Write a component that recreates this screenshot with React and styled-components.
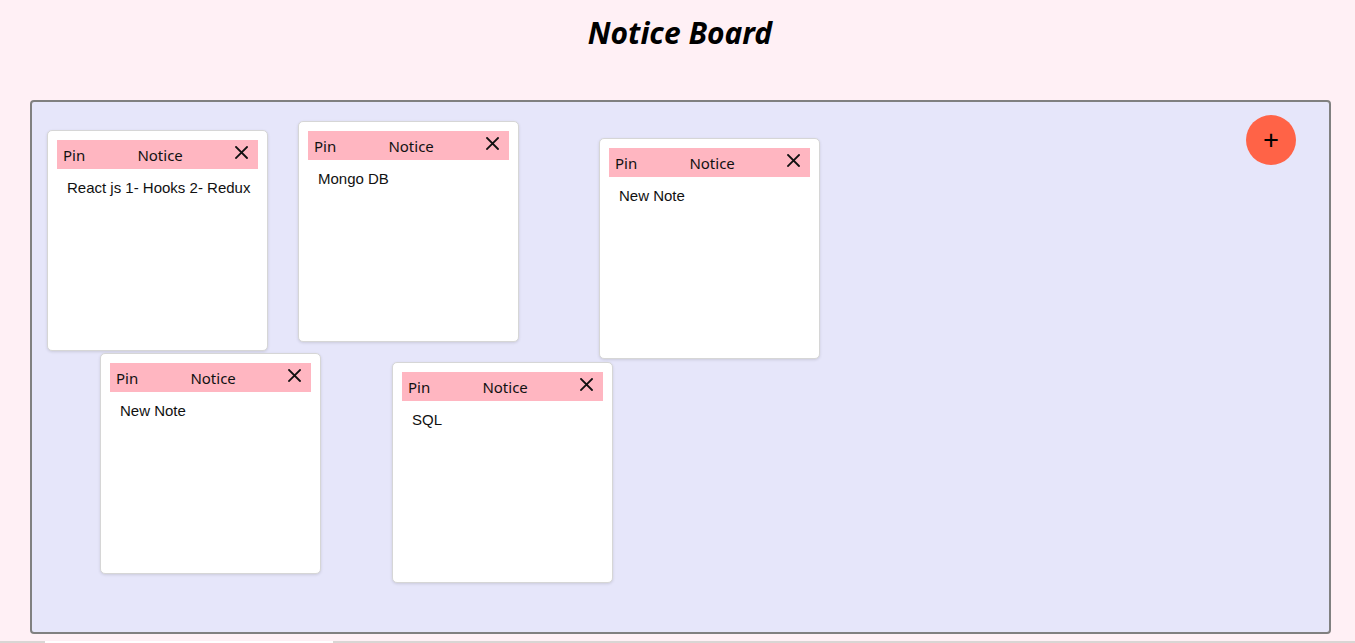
import React from 'react'
import styled, { createGlobalStyle } from 'styled-components'

const GlobalStyle = createGlobalStyle`
  html, body {
    margin: 0;
    padding: 0;
    background: #fff0f5;
    font-family: "Noto Sans", "Open Sans", sans-serif;
    overflow: hidden;
  }
`

const Page = styled.div`
  display: flex;
  flex-direction: column;
  min-height: 643px;
`

const Title = styled.h1`
  margin: 0;
  height: 100px;
  padding-top: 12px;
  box-sizing: border-box;
  text-align: center;
  font-size: 30px;
  font-weight: 700;
  font-style: italic;
  color: #000;
  padding-left: 5px;
`

const Board = styled.div`
  position: relative;
  margin-left: 30px;
  width: 1301px;
  height: 534px;
  box-sizing: border-box;
  background: #e6e6fa;
  border: 2px solid #808080;
  border-radius: 4px;
`

const AddButton = styled.button`
  position: absolute;
  top: 13px;
  right: 33px;
  width: 50px;
  height: 50px;
  border: none;
  border-radius: 50%;
  background: #ff6347;
  color: #000;
  font-size: 28px;
  line-height: 1;
  padding: 0 0 3px;
  display: flex;
  align-items: center;
  justify-content: center;
  cursor: pointer;
  font-family: "Noto Sans", sans-serif;
`

const Note = styled.div`
  position: absolute;
  left: ${p => p.x}px;
  top: ${p => p.y}px;
  width: 221px;
  height: 221px;
  box-sizing: border-box;
  padding: 9px;
  background: #fff;
  border: 1px solid #d6d6d6;
  border-radius: 5px;
  box-shadow: 0 1px 3px rgba(0, 0, 0, 0.12);
`

const NoteHeader = styled.div`
  display: flex;
  align-items: center;
  justify-content: space-between;
  height: 29px;
  padding: 0 10px 0 6px;
  background: #ffb6c1;
  font-size: 15px;
  color: #111;
`

const HeaderLabel = styled.span`
  padding-top: 1px;
`

const Close = styled.span`
  display: flex;
  margin-bottom: 5px;
  cursor: pointer;
`

const NoteBody = styled.div`
  padding: 10px 0 0 10px;
  white-space: nowrap;
  font-family: "Liberation Sans", Arial, sans-serif;
  font-size: 15px;
  color: #111;
`

const Footer = styled.div`
  margin-top: 7px;
  height: 2px;
  background: #d9d6d4;
  display: flex;
  padding-left: 45px;
`

const FooterTab = styled.div`
  width: 288px;
  background: #fff;
`

const CloseIcon = () => (
  <svg width="13" height="13" viewBox="0 0 13 13">
    <path d="M1 1 L12 12 M12 1 L1 12" stroke="#111" strokeWidth="1.8" strokeLinecap="square" />
  </svg>
)

const notes = [
  { id: 1, x: 15, y: 28, text: 'React js 1- Hooks 2- Redux' },
  { id: 2, x: 266, y: 19, text: 'Mongo DB' },
  { id: 3, x: 567, y: 36, text: 'New Note' },
  { id: 4, x: 68, y: 251, text: 'New Note' },
  { id: 5, x: 360, y: 260, text: 'SQL' },
]

const App = () => {
  return (
    <Page>
      <GlobalStyle />
      <Title>Notice Board</Title>
      <Board>
        {notes.map(n => (
          <Note key={n.id} x={n.x} y={n.y}>
            <NoteHeader>
              <HeaderLabel>Pin</HeaderLabel>
              <HeaderLabel>Notice</HeaderLabel>
              <Close><CloseIcon /></Close>
            </NoteHeader>
            <NoteBody>{n.text}</NoteBody>
          </Note>
        ))}
        <AddButton>+</AddButton>
      </Board>
      <Footer>
        <FooterTab />
      </Footer>
    </Page>
  )
}

export default App
